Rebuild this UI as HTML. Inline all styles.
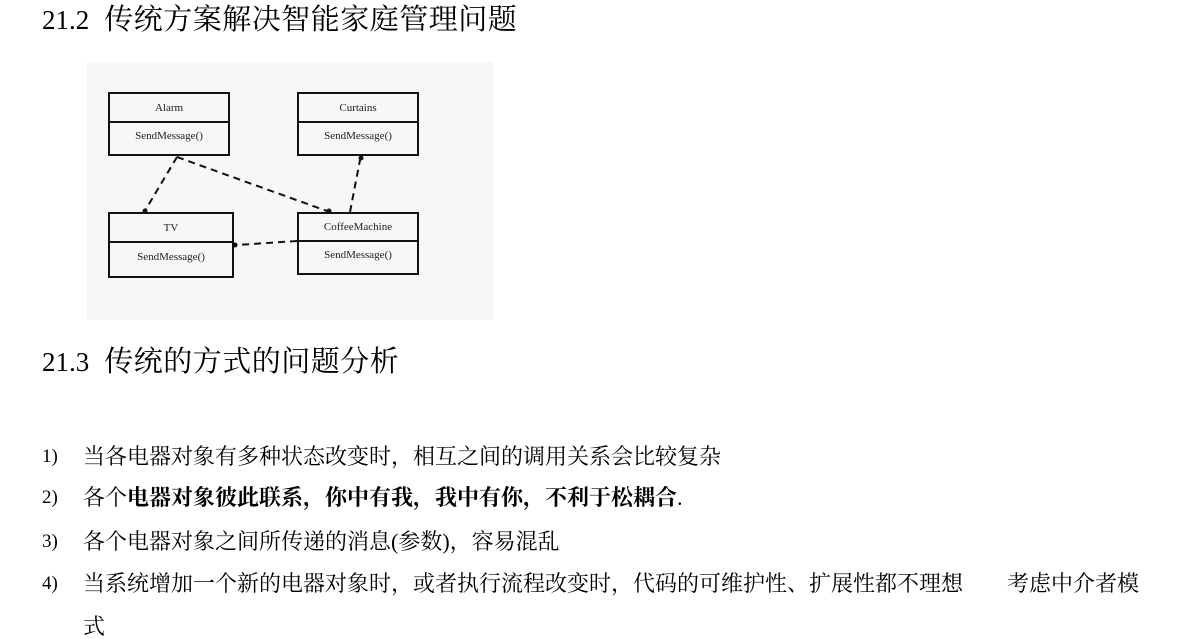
<!DOCTYPE html>
<html><head><meta charset="utf-8"><style>
body{margin:0;width:1192px;height:636px;background:#fff;position:relative;overflow:hidden;font-family:"Liberation Serif","Noto Serif CJK SC",serif;color:#000}
.h{position:absolute;left:42px;font-size:29px;line-height:30px;white-space:nowrap;letter-spacing:0.5px}
.h span{margin-right:15px;font-size:27px;letter-spacing:0}
.li{position:absolute;left:42px;font-size:22px;line-height:24px;white-space:nowrap}
.li .n{position:absolute;left:0;font-size:19px}
.li .t{position:absolute;left:41px}
</style></head><body>
<div class="h" style="top:5px"><span>21.2</span>传统方案解决智能家庭管理问题</div>
<svg style="position:absolute;left:87px;top:62px" width="406" height="258" viewBox="87 62 406 258">
<rect x="87" y="62" width="406" height="258" fill="#f7f7f7"/>
<g fill="none" stroke="#111" stroke-width="2">
<rect x="109" y="93" width="120" height="62"/><line x1="109" y1="122" x2="229" y2="122"/>
<rect x="298" y="93" width="120" height="62"/><line x1="298" y1="122" x2="418" y2="122"/>
<rect x="109" y="213" width="124" height="64"/><line x1="109" y1="242" x2="233" y2="242"/>
<rect x="298" y="213" width="120" height="61"/><line x1="298" y1="241" x2="418" y2="241"/>
<g stroke-dasharray="7,5">
<line x1="177" y1="157" x2="146" y2="209"/>
<line x1="177" y1="157" x2="327" y2="211"/>
<line x1="350" y1="212" x2="360" y2="160"/>
<line x1="297" y1="241" x2="237" y2="245"/>
</g></g>
<g fill="#111">
<circle cx="145" cy="211" r="2.5"/><circle cx="329" cy="211" r="2.5"/><circle cx="361" cy="158" r="2.5"/><circle cx="235" cy="245" r="2.5"/>
</g>
<g font-family="Liberation Serif" font-size="11" text-anchor="middle" fill="#222">
<text x="169" y="111">Alarm</text><text x="169" y="139">SendMessage()</text>
<text x="358" y="111">Curtains</text><text x="358" y="139">SendMessage()</text>
<text x="171" y="231">TV</text><text x="171" y="260">SendMessage()</text>
<text x="358" y="230">CoffeeMachine</text><text x="358" y="258">SendMessage()</text>
</g></svg>
<div class="h" style="top:347px"><span>21.3</span>传统的方式的问题分析</div>
<div class="li" style="top:445px"><span class="n">1)</span><span class="t">当各电器对象有多种状态改变时，相互之间的调用关系会比较复杂</span></div>
<div class="li" style="top:486px"><span class="n">2)</span><span class="t">各个<b>电器对象彼此联系，你中有我，我中有你，不利于松耦合</b>.</span></div>
<div class="li" style="top:530px"><span class="n">3)</span><span class="t">各个电器对象之间所传递的消息(参数)，容易混乱</span></div>
<div class="li" style="top:572px"><span class="n">4)</span><span class="t">当系统增加一个新的电器对象时，或者执行流程改变时，代码的可维护性、扩展性都不理想<span style="margin-left:44px">考虑中介者模</span></span></div>
<div class="li" style="top:615px"><span class="t">式</span></div>
</body></html>
